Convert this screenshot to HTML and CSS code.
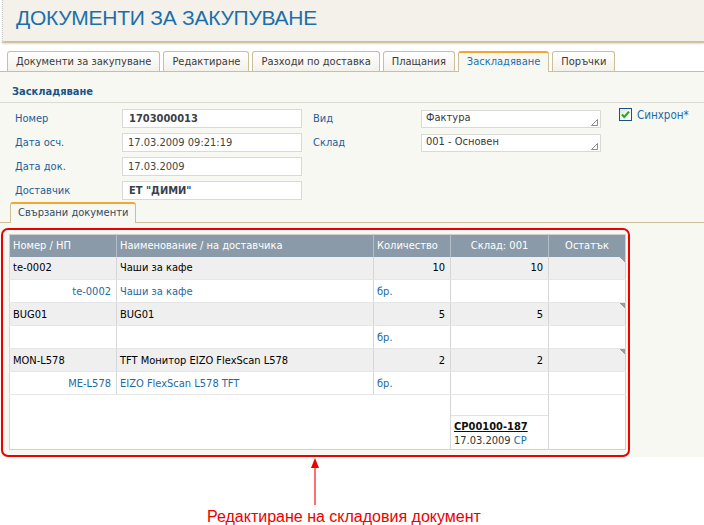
FILE: index.html
```html
<!DOCTYPE html>
<html lang="bg">
<head>
<meta charset="utf-8">
<title>Документи за закупуване</title>
<link rel="stylesheet" href="styles.css">
</head>
<body>
<div class="page">
  <header class="header">
    <h1 class="title">ДОКУМЕНТИ ЗА ЗАКУПУВАНЕ</h1>
  </header>

  <nav class="tabs">
    <span class="tab">Документи за закупуване</span>
    <span class="tab">Редактиране</span>
    <span class="tab">Разходи по доставка</span>
    <span class="tab">Плащания</span>
    <span class="tab active">Заскладяване</span>
    <span class="tab">Поръчки</span>
  </nav>

  <section class="panel">
    <h2 class="section-title">Заскладяване</h2>

    <div class="form">
      <span class="lbl">Номер</span>
      <div class="input strong">1703000013</div>
      <span class="lbl lbl-right">Вид</span>
      <div class="select">Фактура
        <svg class="grip" width="7" height="7" viewBox="0 0 7 7"><path d="M6.5 0.5 L6.5 6.5 L0.5 6.5 Z" fill="none" stroke="#8a8a8a" stroke-width="1"/></svg>
      </div>
      <div class="sync">
        <span class="checkbox">
          <svg width="11" height="11" viewBox="0 0 11 11"><path d="M2 5.5 L4.3 8 L9 2.6" fill="none" stroke="#1faa1f" stroke-width="2"/></svg>
        </span>
        <span class="sync-label">Синхрон*</span>
      </div>

      <span class="lbl">Дата осч.</span>
      <div class="input">17.03.2009 09:21:19</div>
      <span class="lbl lbl-right">Склад</span>
      <div class="select">001 - Основен
        <svg class="grip" width="7" height="7" viewBox="0 0 7 7"><path d="M6.5 0.5 L6.5 6.5 L0.5 6.5 Z" fill="none" stroke="#8a8a8a" stroke-width="1"/></svg>
      </div>
      <span class="filler"></span>

      <span class="lbl">Дата док.</span>
      <div class="input">17.03.2009</div>
      <span class="filler wide"></span>

      <span class="lbl">Доставчик</span>
      <div class="input strong">ЕТ "ДИМИ"</div>
      <span class="filler wide"></span>
    </div>

    <div class="subtabs">
      <span class="subtab">Свързани документи</span>
    </div>

    <div class="highlight">
      <table class="grid">
        <colgroup>
          <col class="c-code"><col class="c-name"><col class="c-qty"><col class="c-store"><col class="c-rest">
        </colgroup>
        <thead>
          <tr>
            <th>Номер / НП</th>
            <th>Наименование / на доставчика</th>
            <th>Количество</th>
            <th class="center">Склад: 001</th>
            <th class="center">Остатък</th>
          </tr>
        </thead>
        <tbody>
          <tr class="item">
            <td>te-0002</td><td>Чаши за кафе</td><td class="num">10</td><td class="num">10</td><td class="flag"></td>
          </tr>
          <tr class="supplier">
            <td class="num">te-0002</td><td>Чаши за кафе</td><td>бр.</td><td></td><td></td>
          </tr>
          <tr class="item">
            <td>BUG01</td><td>BUG01</td><td class="num">5</td><td class="num">5</td><td class="flag"></td>
          </tr>
          <tr class="supplier">
            <td class="num"></td><td></td><td>бр.</td><td></td><td></td>
          </tr>
          <tr class="item">
            <td>MON-L578</td><td>TFT Монитор EIZO FlexScan L578</td><td class="num">2</td><td class="num">2</td><td class="flag"></td>
          </tr>
          <tr class="supplier">
            <td class="num">ME-L578</td><td>EIZO FlexScan L578 TFT</td><td>бр.</td><td></td><td></td>
          </tr>
          <tr class="summary">
            <td colspan="3"></td>
            <td class="doc-cell">
              <div class="doc">
                <span class="doc-no">СР00100-187</span>
                <span class="doc-date">17.03.2009 <span class="doc-type">СР</span></span>
              </div>
            </td>
            <td></td>
          </tr>
        </tbody>
      </table>
    </div>
  </section>

  <div class="annotation">
    <svg class="arrow" width="12" height="48" viewBox="0 0 12 48">
      <path d="M6 0 L10 10 L2 10 Z" fill="#ee0000"/>
      <rect x="5" y="10" width="2" height="37" fill="#ff6f6f"/>
    </svg>
    <p class="note">Редактиране на складовия документ</p>
  </div>
</div>
</body>
</html>
```

FILE: styles.css
```css
* { box-sizing: border-box; }

html, body {
  margin: 0;
  padding: 0;
  background: #ffffff;
}

body {
  font-family: "DejaVu Sans Condensed", "Liberation Sans", sans-serif;
  font-size: 11px;
  color: #333;
}

.page {
  width: 704px;
}

/* Header */
.header {
  height: 43px;
  margin-left: 2px;
  border-left: 1px dotted #c9c9c9;
  border-bottom: 2px solid #cbc2a3;
  background: #f3f1ea;
  box-shadow: 0 1px 2px rgba(120, 110, 80, 0.25);
  padding: 6px 0 0 13px;
}

.title {
  margin: 0;
  font-family: "Liberation Sans", sans-serif;
  font-weight: normal;
  font-size: 21px;
  line-height: 24px;
  letter-spacing: -0.25px;
  color: #1b6fab;
}

/* Tabs */
.tabs {
  display: flex;
  align-items: flex-end;
  gap: 3px;
  height: 29px;
  padding: 8px 0 0 7px;
  border-bottom: 1px solid #cbbf99;
}

.tab {
  height: 20px;
  padding: 0 8px;
  border: 1px solid #cbbf99;
  border-bottom: none;
  border-radius: 3px 3px 0 0;
  background: linear-gradient(#ffffff, #f3f1ea);
  line-height: 19px;
  color: #3a3a3a;
  white-space: nowrap;
}

.tab.active {
  height: 21px;
  margin-bottom: -1px;
  border-top: 2px solid #f2a630;
  background: #f8f8f3;
  color: #1a6fb0;
  line-height: 18px;
}

/* Panel */
.panel {
  background: #f8f8f3;
}

.section-title {
  margin: 0;
  height: 31px;
  padding: 12px 0 0 12px;
  border-bottom: 1px solid #dcdbd2;
  font-size: 11px;
  font-weight: bold;
  line-height: 16px;
  color: #1a5587;
}

/* Form */
.form {
  display: grid;
  grid-template-columns: 107px 180px 119px 180px 1fr;
  grid-auto-rows: 19px;
  row-gap: 5px;
  padding: 6px 0 0 15px;
}

.lbl {
  line-height: 19px;
  color: #1d5e98;
}

.lbl-right {
  padding-left: 11px;
}

.filler.wide {
  grid-column: span 3;
}

.input,
.select {
  height: 19px;
  background: #ffffff;
  border: 1px solid #d9d9d6;
  line-height: 17px;
  padding-left: 5px;
  color: #444;
}

.input.strong {
  font-weight: bold;
  color: #3a3f48;
  padding-left: 6px;
}

.select {
  display: flex;
  justify-content: space-between;
  align-items: flex-end;
  padding: 0 2px 1px 4px;
  margin-top: 1px;
  height: 18px;
  line-height: 16px;
  color: #3a3a3a;
}

.grip {
  display: block;
  flex: none;
}

.sync {
  display: flex;
  align-items: flex-start;
  gap: 5px;
  padding-left: 18px;
  margin-top: -1px;
}

.checkbox {
  display: flex;
  align-items: center;
  justify-content: center;
  width: 13px;
  height: 13px;
  border: 1px solid #1c5283;
  background: linear-gradient(135deg, #e6e6e0, #ffffff);
}

.sync-label {
  font-size: 11.5px;
  line-height: 14px;
  color: #1a6aa8;
}

/* Sub tabs */
.subtabs {
  display: flex;
  margin-top: 2px;
  padding-left: 10px;
  border-bottom: 1px solid #cbbf99;
}

.subtab {
  height: 21px;
  margin-bottom: -1px;
  padding: 0 7px;
  border: 1px solid #cbbf99;
  border-top: 2px solid #f2a630;
  border-bottom: none;
  border-radius: 3px 3px 0 0;
  background: #f8f8f3;
  line-height: 18px;
  color: #2f4a66;
}

/* Highlighted grid */
.highlight {
  width: 629px;
  margin: 5px 0 -4px 1px;
  padding: 4px 3px 5px 6px;
  border: 2px solid #ee0000;
  border-radius: 7px;
}

.grid {
  width: 616px;
  table-layout: fixed;
  border-collapse: collapse;
  border: 1px solid #cfcfcf;
  background: #ffffff;
}

.c-code { width: 107px; }
.c-name { width: 257px; }
.c-qty { width: 77px; }
.c-store { width: 98px; }
.c-rest { width: 77px; }

.grid th {
  height: 22px;
  padding: 0 3px;
  background: #8a9aa9;
  border-left: 1px solid #b3bec8;
  color: #ffffff;
  font-weight: normal;
  text-align: left;
  white-space: nowrap;
}

.grid th:first-child { border-left: none; }

.grid th.center { text-align: center; }

.grid td {
  height: 23px;
  padding: 0 5px 0 3px;
  border-left: 1px solid #d6d6d6;
  border-bottom: 1px solid #e6e6e6;
  white-space: nowrap;
  color: #000;
}

.grid td.num { text-align: right; }

.item td { background: #efefef; }

.supplier td {
  background: #ffffff;
  color: #1c6aa3;
}

.flag {
  background-image: linear-gradient(225deg, #9a9a9a 4px, transparent 4px) !important;
  background-repeat: no-repeat !important;
  background-position: top right !important;
  background-size: 7px 7px !important;
}

.item td.flag { background-color: #efefef; }

.summary td {
  height: 55px;
  border-bottom: none;
  vertical-align: bottom;
  background: #ffffff;
}

.summary td.doc-cell {
  padding: 0;
}

.doc {
  display: flex;
  flex-direction: column;
  border-top: 1px solid #e2e2e2;
  padding: 4px 3px 1px 3px;
  line-height: 14px;
}

.doc-no {
  font-weight: bold;
  text-decoration: underline;
  color: #111;
}

.doc-date { color: #333; }

.doc-type { color: #1c6aa3; }

/* Annotation */
.annotation {
  padding-top: 5px;
}

.arrow {
  display: block;
  margin-left: 309px;
}

.note {
  margin: 2px 0 0 207px;
  font-family: "Liberation Sans", sans-serif;
  font-size: 16px;
  line-height: 18px;
  color: #ee0000;
}
```
